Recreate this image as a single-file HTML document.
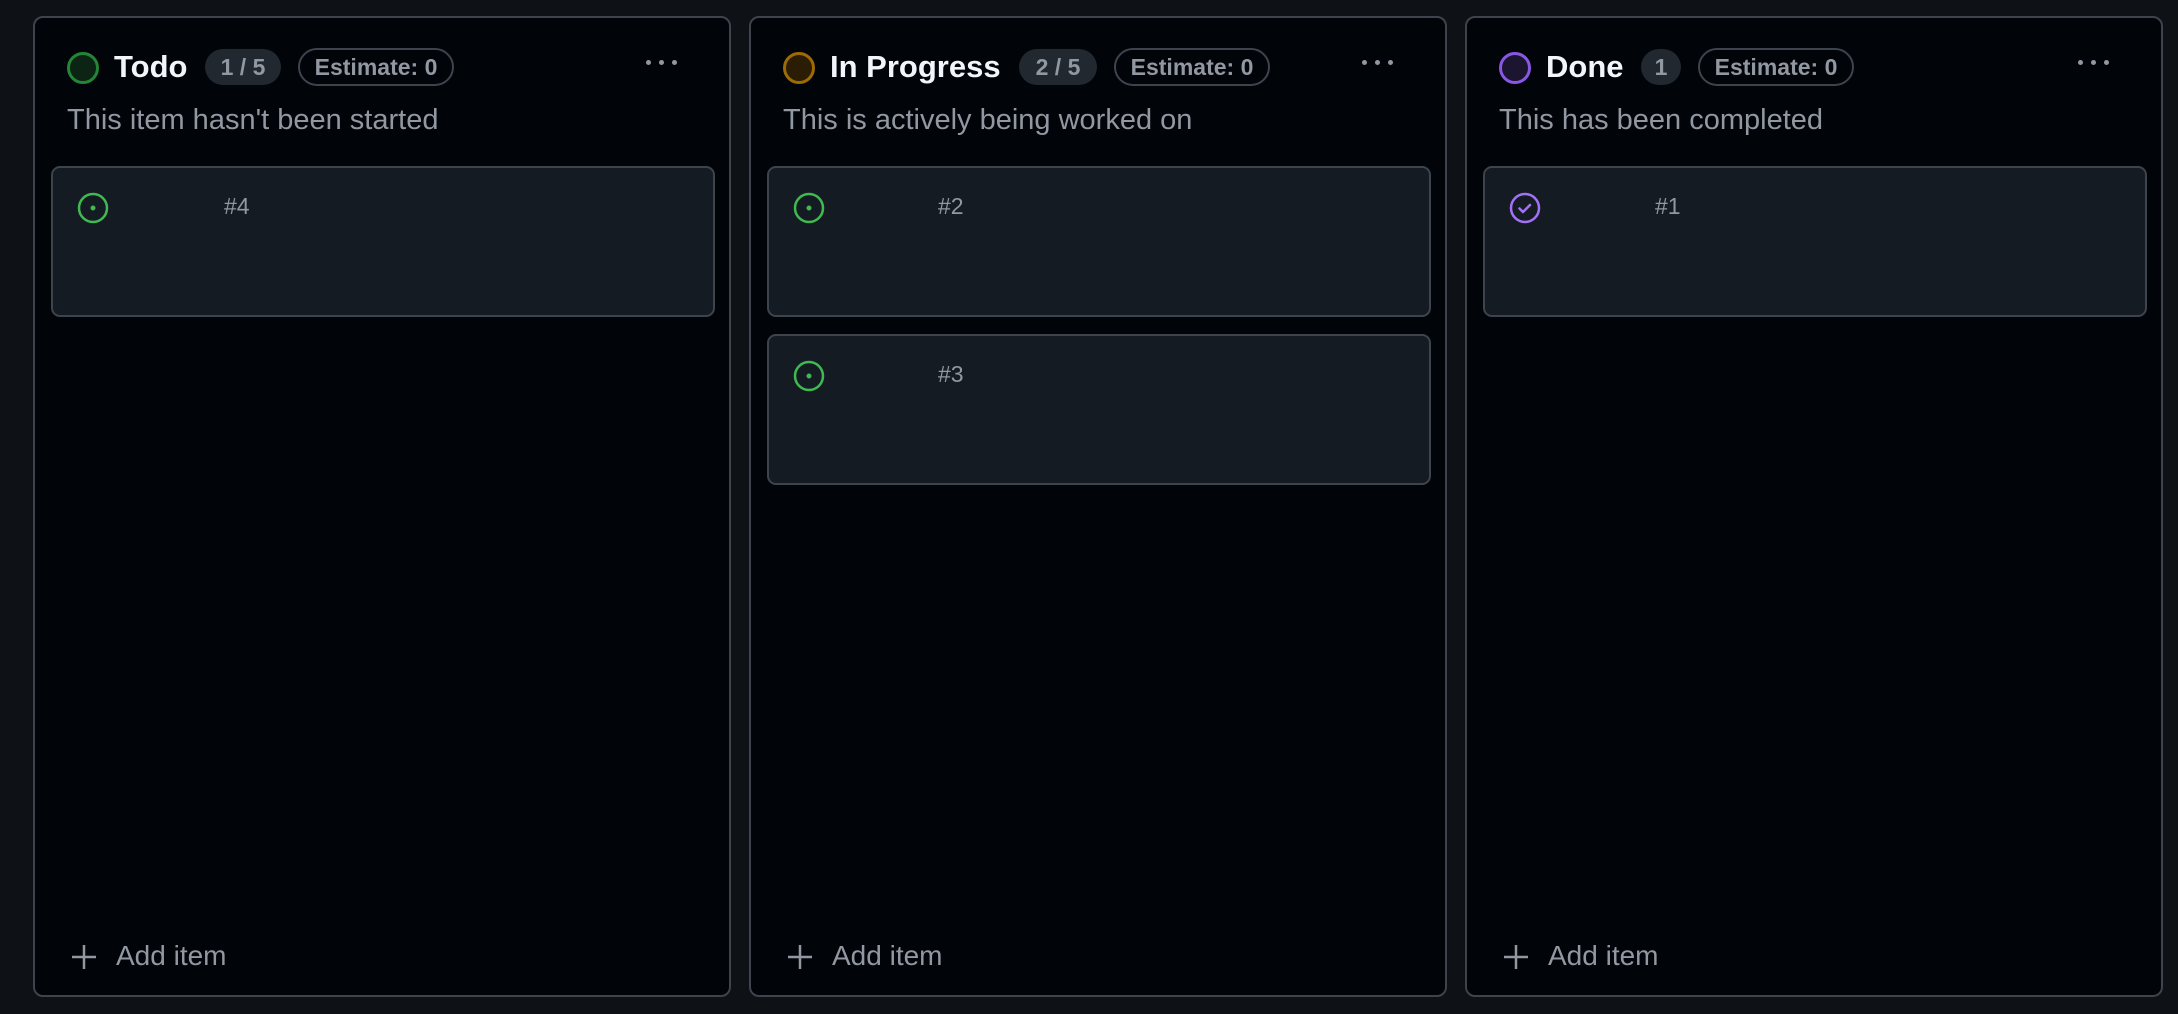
<!DOCTYPE html>
<html><head><meta charset="utf-8"><style>
*{margin:0;padding:0;box-sizing:border-box}
body{width:2178px;height:1014px;background:#0e1116;font-family:"Liberation Sans",sans-serif;position:relative;overflow:hidden}
.col{position:absolute;top:16px;width:698px;height:981px;background:#010409;border:2px solid #3d444d;border-radius:10px}
.col>*{position:absolute}
.ic{left:32px;top:34px;width:32px;height:32px;border-radius:50%;border:3.5px solid}
.t{left:79px;top:31px;font-size:31px;font-weight:bold;color:#f0f6fc;line-height:36px;white-space:nowrap}
.b{top:31px;height:36px;border-radius:18px;background:#212830;color:#9198a1;font-size:23px;font-weight:bold;line-height:36px;text-align:center}
.e{top:30px;height:38px;border-radius:19px;border:2px solid #3d444d;color:#9198a1;font-size:23px;font-weight:bold;line-height:34px;text-align:center;width:156px}
.dots{left:611px;top:42px;width:50px;height:6px}
.dots i{display:block;float:left;width:5px;height:5px;border-radius:50%;background:#9198a1;margin-right:8px}
.d{left:32px;top:85px;font-size:29px;color:#9198a1;line-height:34px;white-space:nowrap}
.card{left:16px;width:664px;height:151px;background:#151b23;border:2px solid #3d444d;border-radius:9px}
.card svg{position:absolute;left:24px;top:24px}
.card span{position:absolute;top:25px;font-size:23px;color:#9198a1}
.add{left:36px;top:926px;width:26px;height:26px}
.addt{left:81px;top:922px;font-size:28px;color:#9198a1;white-space:nowrap}
</style></head><body>

<div class="col" style="left:33px">
<div class="ic" style="border-color:#238636;background:#0c2414"></div>
<div class="t">Todo</div>
<div class="b" style="left:170px;width:76px">1 / 5</div>
<div class="e" style="left:263px">Estimate: 0</div>
<div class="dots"><i></i><i></i><i></i></div>
<div class="d">This item hasn't been started</div>
<div class="card" style="top:148px"><svg width="32" height="32" viewBox="0 0 32 32"><circle cx="16" cy="16" r="14" fill="none" stroke="#3fb950" stroke-width="2.5"/><circle cx="16" cy="16" r="2.5" fill="#3fb950"/></svg><span style="left:171px">#4</span></div>
<svg class="add" viewBox="0 0 26 26"><path d="M13 1v24M1 13h24" stroke="#9198a1" stroke-width="2.5"/></svg>
<div class="addt">Add item</div>
</div>

<div class="col" style="left:749px">
<div class="ic" style="border-color:#9e6a03;background:#2a1d04"></div>
<div class="t">In Progress</div>
<div class="b" style="left:268px;width:78px">2 / 5</div>
<div class="e" style="left:363px">Estimate: 0</div>
<div class="dots"><i></i><i></i><i></i></div>
<div class="d">This is actively being worked on</div>
<div class="card" style="top:148px"><svg width="32" height="32" viewBox="0 0 32 32"><circle cx="16" cy="16" r="14" fill="none" stroke="#3fb950" stroke-width="2.5"/><circle cx="16" cy="16" r="2.5" fill="#3fb950"/></svg><span style="left:169px">#2</span></div>
<div class="card" style="top:316px"><svg width="32" height="32" viewBox="0 0 32 32"><circle cx="16" cy="16" r="14" fill="none" stroke="#3fb950" stroke-width="2.5"/><circle cx="16" cy="16" r="2.5" fill="#3fb950"/></svg><span style="left:169px">#3</span></div>
<svg class="add" viewBox="0 0 26 26"><path d="M13 1v24M1 13h24" stroke="#9198a1" stroke-width="2.5"/></svg>
<div class="addt">Add item</div>
</div>

<div class="col" style="left:1465px">
<div class="ic" style="border-color:#8957e5;background:#1c1530"></div>
<div class="t">Done</div>
<div class="b" style="left:174px;width:40px">1</div>
<div class="e" style="left:231px">Estimate: 0</div>
<div class="dots"><i></i><i></i><i></i></div>
<div class="d">This has been completed</div>
<div class="card" style="top:148px"><svg width="32" height="32" viewBox="0 0 32 32"><circle cx="16" cy="16" r="14" fill="none" stroke="#a371f7" stroke-width="2.5"/><path d="M10.5 16.5l3.5 3.5 7-7" fill="none" stroke="#a371f7" stroke-width="2.5" stroke-linecap="round" stroke-linejoin="round"/></svg><span style="left:170px">#1</span></div>
<svg class="add" viewBox="0 0 26 26"><path d="M13 1v24M1 13h24" stroke="#9198a1" stroke-width="2.5"/></svg>
<div class="addt">Add item</div>
</div>

</body></html>
